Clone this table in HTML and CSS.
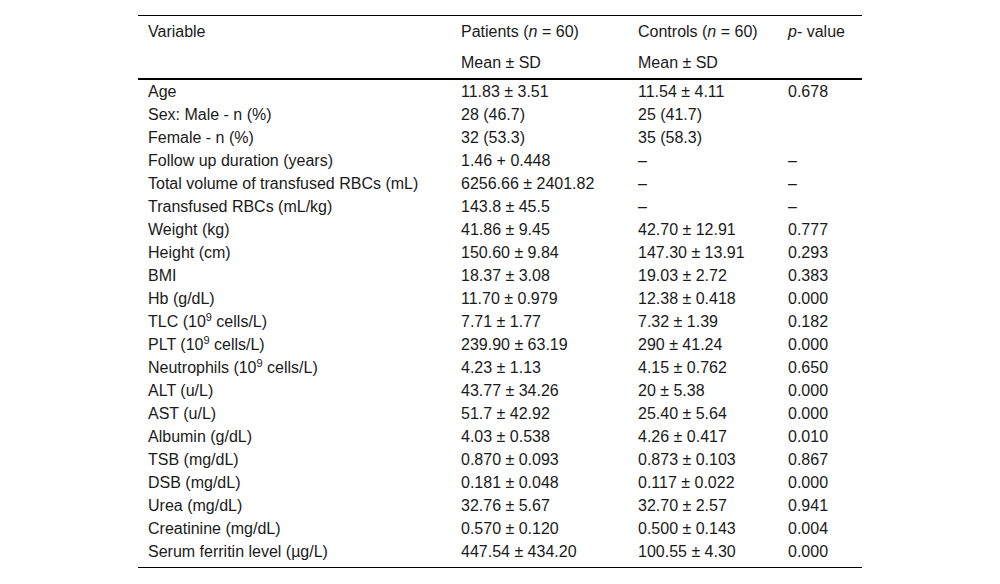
FILE: index.html
```html
<!DOCTYPE html>
<html lang="en">
<head>
<meta charset="utf-8">
<title>Table</title>
<link rel="stylesheet" href="styles.css">
</head>
<body>
<div class="wrap">
<table class="data">
  <thead>
    <tr class="h1">
      <th class="c1">Variable</th>
      <th class="c2">Patients (<i>n</i> = 60)</th>
      <th class="c3">Controls (<i>n</i> = 60)</th>
      <th class="c4"><i>p</i>- value</th>
    </tr>
    <tr class="h2">
      <th></th>
      <th>Mean ± SD</th>
      <th>Mean ± SD</th>
      <th></th>
    </tr>
  </thead>
  <tbody>
    <tr><td>Age</td><td>11.83 ± 3.51</td><td>11.54 ± 4.11</td><td>0.678</td></tr>
    <tr><td>Sex: Male - n (%)</td><td>28 (46.7)</td><td>25 (41.7)</td><td></td></tr>
    <tr><td>Female - n (%)</td><td>32 (53.3)</td><td>35 (58.3)</td><td></td></tr>
    <tr><td>Follow up duration (years)</td><td>1.46 + 0.448</td><td>–</td><td>–</td></tr>
    <tr><td>Total volume of transfused RBCs (mL)</td><td>6256.66 ± 2401.82</td><td>–</td><td>–</td></tr>
    <tr><td>Transfused RBCs (mL/kg)</td><td>143.8 ± 45.5</td><td>–</td><td>–</td></tr>
    <tr><td>Weight (kg)</td><td>41.86 ± 9.45</td><td>42.70 ± 12.91</td><td>0.777</td></tr>
    <tr><td>Height (cm)</td><td>150.60 ± 9.84</td><td>147.30 ± 13.91</td><td>0.293</td></tr>
    <tr><td>BMI</td><td>18.37 ± 3.08</td><td>19.03 ± 2.72</td><td>0.383</td></tr>
    <tr><td>Hb (g/dL)</td><td>11.70 ± 0.979</td><td>12.38 ± 0.418</td><td>0.000</td></tr>
    <tr><td>TLC (10<sup>9</sup> cells/L)</td><td>7.71 ± 1.77</td><td>7.32 ± 1.39</td><td>0.182</td></tr>
    <tr><td>PLT (10<sup>9</sup> cells/L)</td><td>239.90 ± 63.19</td><td>290 ± 41.24</td><td>0.000</td></tr>
    <tr><td>Neutrophils (10<sup>9</sup> cells/L)</td><td>4.23 ± 1.13</td><td>4.15 ± 0.762</td><td>0.650</td></tr>
    <tr><td>ALT (u/L)</td><td>43.77 ± 34.26</td><td>20 ± 5.38</td><td>0.000</td></tr>
    <tr><td>AST (u/L)</td><td>51.7 ± 42.92</td><td>25.40 ± 5.64</td><td>0.000</td></tr>
    <tr><td>Albumin (g/dL)</td><td>4.03 ± 0.538</td><td>4.26 ± 0.417</td><td>0.010</td></tr>
    <tr><td>TSB (mg/dL)</td><td>0.870 ± 0.093</td><td>0.873 ± 0.103</td><td>0.867</td></tr>
    <tr><td>DSB (mg/dL)</td><td>0.181 ± 0.048</td><td>0.117 ± 0.022</td><td>0.000</td></tr>
    <tr><td>Urea (mg/dL)</td><td>32.76 ± 5.67</td><td>32.70 ± 2.57</td><td>0.941</td></tr>
    <tr><td>Creatinine (mg/dL)</td><td>0.570 ± 0.120</td><td>0.500 ± 0.143</td><td>0.004</td></tr>
    <tr class="last"><td>Serum ferritin level (µg/L)</td><td>447.54 ± 434.20</td><td>100.55 ± 4.30</td><td>0.000</td></tr>
  </tbody>
</table>
</div>
</body>
</html>
```
FILE: styles.css
```css
html, body {
  margin: 0;
  padding: 0;
  background: #fff;
}
.wrap {
  padding-top: 15px;
  display: flex;
  justify-content: center;
}
.data {
  width: 724px;
  table-layout: fixed;
  border-collapse: collapse;
  font-family: "Liberation Sans", Arial, sans-serif;
  font-size: 16px;
  color: #1a1a1a;
  border-top: 1px solid #000;
  border-bottom: 1px solid #000;
}
.data th, .data td {
  text-align: left;
  font-weight: normal;
  padding: 3px 0 3px 10px;
  line-height: 17px;
  vertical-align: top;
  white-space: nowrap;
}
.data th.c1 { width: 303px; }
.data th.c2 { width: 167px; }
.data th.c3 { width: 140px; }
.data th.c4 { width: 74px; }
.data .h1 th, .data .h2 th {
  padding-top: 7px;
  padding-bottom: 7px;
}
.data .h2 th {
  border-bottom: 2px solid #000;
}
.data .last td {
  padding-bottom: 7px;
}
.data sup {
  font-size: 11px;
  line-height: 0;
  vertical-align: 6px;
}
```
